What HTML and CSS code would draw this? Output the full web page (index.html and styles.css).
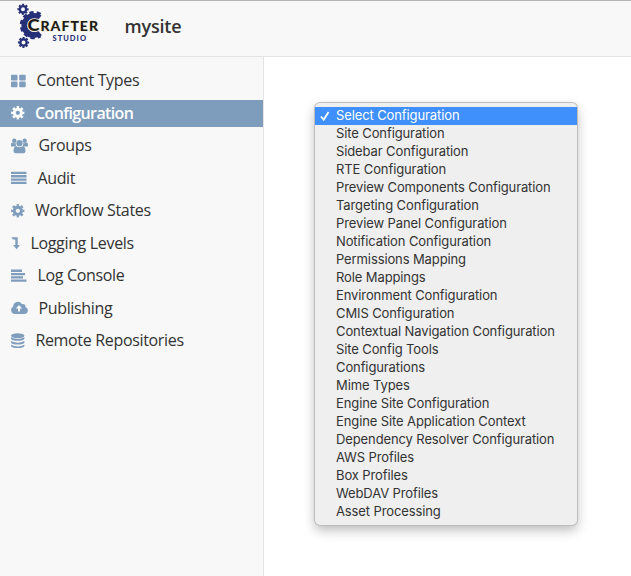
FILE: index.html
```html
<!DOCTYPE html>
<html lang="en">
<head>
<meta charset="utf-8">
<title>mysite</title>
<link rel="stylesheet" href="styles.css">
</head>
<body>
<svg width="0" height="0" class="defs">
  <defs>
    <symbol id="cog" viewBox="0 0 14 14"><circle cx="7" cy="7" r="3.7" fill="none" stroke="currentColor" stroke-width="3"/><circle cx="7" cy="7" r="5.800" fill="none" stroke="currentColor" stroke-width="2.200" pathLength="16" stroke-dasharray="1.100 .9" stroke-dashoffset=".55"/></symbol>
  </defs>
</svg>
<header class="topbar">
  <svg class="logo" width="86" height="50" viewBox="0 0 86 50">
    <g fill="none" stroke="#263078">
      <circle cx="9" cy="9.300" r="3.200" stroke-width="2.400"/>
      <circle cx="9" cy="9.300" r="4.700" stroke-width="1.800" pathLength="16" stroke-dasharray="1.100 .9" stroke-dashoffset=".5"/>
      <circle cx="9.500" cy="42.500" r="3.200" stroke-width="2.400"/>
      <circle cx="9.500" cy="42.500" r="4.700" stroke-width="1.800" pathLength="16" stroke-dasharray="1.100 .9" stroke-dashoffset=".5"/>
      <path d="M25.700 17.800A9.600 9.600 0 1 0 26 33" stroke-width="6"/>
      <path d="M26.500 14.300A12.700 12.700 0 1 0 26.500 36" stroke-width="2.800" stroke-dasharray="4.200 3"/>
    </g>
    <g class="wordmark"><text x="13.500" y="31" class="logo-c" textLength="12" lengthAdjust="spacingAndGlyphs">C</text><text x="26.500" y="30.500" class="logo-name" textLength="57.500" lengthAdjust="spacing">RAFTER</text></g>
    <text x="38.500" y="40.600" class="logo-sub" textLength="33.500" lengthAdjust="spacing">STUDIO</text>
  </svg>
  <h1 class="site">mysite</h1>
</header>
<div class="body">
  <nav class="sidebar">
    <a class="item"><svg width="15" height="14" viewBox="0 0 15 14"><path d="M1 .7h4.500q1 0 1 1v3.700q0 1-1 1H1q-1 0-1-1V1.700q0-1 1-1zM9.200 .7h4.500q1 0 1 1v3.700q0 1-1 1H9.200q-1 0-1-1V1.700q0-1 1-1zM1 7.500h4.500q1 0 1 1v3.700q0 1-1 1H1q-1 0-1-1V8.500q0-1 1-1zM9.200 7.500h4.500q1 0 1 1v3.700q0 1-1 1H9.200q-1 0-1-1V8.500q0-1 1-1z"/></svg><span>Content Types</span></a>
    <a class="item active"><svg width="13.700" height="13.700"><use href="#cog"/></svg><span>Configuration</span></a>
    <a class="item"><svg width="17" height="16" viewBox="0 0 17 16"><circle cx="3.300" cy="2.700" r="2.200"/><circle cx="13.700" cy="2.700" r="2.200"/><path d="M0 8V6.500Q0 4.500 1.300 4.500 3 5.800 4.800 5 4.500 7 5.500 8.500H1Q0 8.700 0 8zM17 8V6.500q0-2-1.300-2-1.700 1.300-3.500.5.300 2-.7 3.500H16q1 .2 1-.5z"/><circle cx="8.500" cy="5.200" r="3.100"/><path d="M2.500 13q0-4.800 3-4.800 3 2 6 0 3 0 3 4.800 0 2.300-2.200 2.300H4.700Q2.500 15.300 2.500 13z"/></svg><span>Groups</span></a>
    <a class="item"><svg width="16" height="14" viewBox="0 0 16 14"><path d="M0 .8h15.500v2.300H0zM0 4.100h15.500v2.300H0zM0 7.400h15.500v2.300H0zM0 10.700h15.500v2.300H0z"/></svg><span>Audit</span></a>
    <a class="item"><svg width="13.700" height="13.700"><use href="#cog"/></svg><span>Workflow States</span></a>
    <a class="item"><svg width="9" height="14" viewBox="0 0 9 14"><path d="M.2 1.300H6.700V9H9L5.600 13.200 2 9h2.300V3.500H2z"/></svg><span>Logging Levels</span></a>
    <a class="item"><svg width="16" height="14" viewBox="0 0 16 14"><path d="M0 .6h11v2.300H0zM0 3.900h14v2.300H0zM0 7.200h12v2.300H0zM0 10.500h15.500v2.300H0z"/></svg><span>Log Console</span></a>
    <a class="item"><svg width="17" height="14" viewBox="0 0 17 14"><path fill-rule="evenodd" d="M4 13A4 4 0 0 1 2.200 5.500 4.700 4.700 0 0 1 11 3.200a2.400 2.400 0 0 1 3.400 2.800A3.600 3.600 0 0 1 13.300 13zM8 4L4.800 7.400H7V10.500h2V7.400h2.200z"/></svg><span>Publishing</span></a>
    <a class="item"><svg width="14" height="16" viewBox="0 0 14 16"><ellipse cx="6.700" cy="2.700" rx="6.700" ry="2.500"/><path d="M0 4.300q6.700 3.600 13.400 0v1.400q-1 2-6.700 2T0 5.700zM0 8q6.700 3.600 13.400 0v1.400q-1 2-6.700 2T0 9.400zM0 11.700q6.700 3.600 13.400 0v1.400q-1 2-6.700 2T0 13.100z"/></svg><span>Remote Repositories</span></a>
  </nav>
  <main class="content">
    <ul class="menu">
      <li class="selected"><svg class="check" width="10" height="10" viewBox="0 0 10 10"><path d="M1 5.500L3.700 8.700 8.600 1" fill="none" stroke="#fff" stroke-width="1.800"/></svg><span>Select Configuration</span></li>
      <li>Site Configuration</li>
      <li>Sidebar Configuration</li>
      <li>RTE Configuration</li>
      <li>Preview Components Configuration</li>
      <li>Targeting Configuration</li>
      <li>Preview Panel Configuration</li>
      <li>Notification Configuration</li>
      <li>Permissions Mapping</li>
      <li>Role Mappings</li>
      <li>Environment Configuration</li>
      <li>CMIS Configuration</li>
      <li>Contextual Navigation Configuration</li>
      <li>Site Config Tools</li>
      <li>Configurations</li>
      <li>Mime Types</li>
      <li>Engine Site Configuration</li>
      <li>Engine Site Application Context</li>
      <li>Dependency Resolver Configuration</li>
      <li>AWS Profiles</li>
      <li>Box Profiles</li>
      <li>WebDAV Profiles</li>
      <li>Asset Processing</li>
    </ul>
  </main>
</div>
</body>
</html>
```
FILE: styles.css
```css
* { box-sizing: border-box; }
body {
  margin: 0;
  height: 576px;
  overflow: hidden;
  display: flex;
  flex-direction: column;
  background: #fff;
  color: #333;
  font-family: "Open Sans", sans-serif;
}
.defs { position: absolute; }
.topbar {
  height: 57px;
  flex: none;
  display: flex;
  align-items: flex-start;
  padding-left: 14px;
  background: #f8f8f8;
  border-top: 1px solid #b4b4b4;
  border-bottom: 1px solid #e4e4e4;
}
.logo { flex: none; margin-top: -1px; }
.logo text { font-family: Lato, sans-serif; font-weight: 900; }
.logo .wordmark { fill: #1c1b18; stroke: #f3efdc; stroke-width: 1.5px; paint-order: stroke; }
.logo .logo-c { font-size: 16px; }
.logo .logo-name { font-size: 14px; }
.logo .logo-sub { font-size: 7.5px; fill: #263078; }
.site {
  margin: 13px 0 0 24.5px;
  font-size: 18px;
  line-height: 25px;
  font-weight: 600;
  letter-spacing: -.2px;
}
.body { flex: 1; display: flex; }
.sidebar {
  width: 264px;
  flex: none;
  display: flex;
  flex-direction: column;
  gap: 5.5px;
  padding-top: 10.3px;
  background: #f8f8f8;
  border-right: 1px solid #e4e4e4;
}
.item {
  height: 27px;
  flex: none;
  display: flex;
  align-items: center;
  gap: 10.4px;
  padding-left: 11px;
  font-size: 16px;
  line-height: 27px;
  letter-spacing: -.33px;
}
.item svg { flex: none; color: #7f9dbd; fill: currentColor; }
.item.active { background: #7e9cbc; color: #fff; font-weight: 600; letter-spacing: -.62px; }
.item.active svg { color: #fff; }
.content { flex: 1; padding: 46px 0 0 51px; }
.menu {
  width: 262px;
  margin: 0;
  padding: 4px 0;
  list-style: none;
  background: #efefef;
  border-radius: 5px;
  box-shadow: 0 0 0 1px #bdbdbd, 0 5px 12px rgba(0, 0, 0, .28);
  color: #333;
  font: 13px/17px Inter, sans-serif;
  letter-spacing: -.11px;
}
.menu li { position: relative; height: 18px; padding-left: 21px; white-space: nowrap; }
.menu .selected { background: #3f90fd; color: #fff; }
.check { position: absolute; left: 5px; top: 4px; }
```
